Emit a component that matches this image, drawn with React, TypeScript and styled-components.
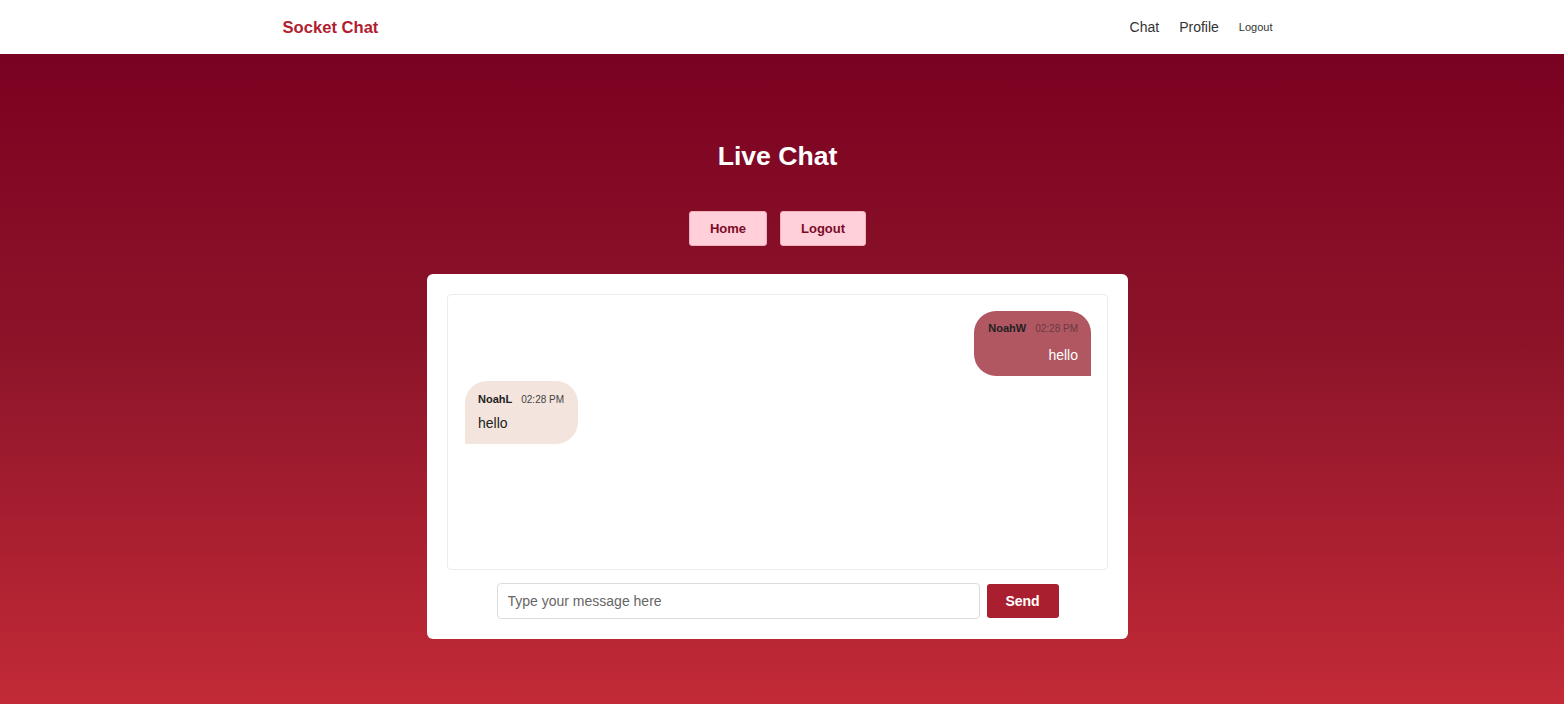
import React from "react";
import styled, { createGlobalStyle } from "styled-components";

const Global = createGlobalStyle`
  * { box-sizing: border-box; }
  html, body { margin: 0; padding: 0; }
  body { font-family: "Liberation Sans", Arial, sans-serif; background: #fff; }
`;

const Page = styled.div`
  display: flex;
  flex-direction: column;
  min-height: 704px;
`;

const NavBar = styled.header`
  height: 54px;
  background: #fff;
  display: flex;
  justify-content: center;
  padding-right: 9px;
`;

const NavInner = styled.div`
  width: 1000px;
  padding: 0 5px 0 5px;
  display: flex;
  align-items: center;
  justify-content: space-between;
`;

const Brand = styled.a`
  color: #b01e30;
  font-weight: 700;
  font-size: 16.6px;
  text-decoration: none;
  margin-top: 2px;
`;

const NavLinks = styled.nav`
  display: flex;
  align-items: center;
  gap: 20px;
`;

const NavLink = styled.a<{ $small?: boolean }>`
  color: #333;
  font-size: ${(p) => (p.$small ? "11px" : "14px")};
  text-decoration: none;
`;

const Main = styled.main`
  flex: 1;
  background: linear-gradient(180deg, #7a0221 0%, #8c1429 45%, #c32a37 100%);
  display: flex;
  flex-direction: column;
  align-items: center;
  padding-top: 87px;
  padding-bottom: 65px;
  padding-right: 9px;
`;

const Title = styled.h1`
  margin: 0;
  color: #fff;
  font-size: 26.6px;
  font-weight: 700;
  line-height: 30px;
`;

const ButtonRow = styled.div`
  display: flex;
  gap: 13px;
  margin-top: 40px;
`;

const PinkButton = styled.button`
  background: #ffd0da;
  color: #7c0a26;
  border: 1px solid #f0b0bd;
  border-radius: 3px;
  height: 35px;
  padding: 0 20px;
  font-family: inherit;
  font-weight: 700;
  font-size: 13px;
`;

const Card = styled.section`
  margin-top: 28px;
  width: 701px;
  background: #fff;
  border-radius: 6px;
  padding: 20px 20px 20px;
  display: flex;
  flex-direction: column;
  align-items: center;
`;

const Messages = styled.div`
  width: 100%;
  height: 276px;
  border: 1px solid #ececec;
  border-radius: 4px;
  padding: 16px 16px 16px 17px;
  display: flex;
  flex-direction: column;
  gap: 5px;
`;

const Bubble = styled.div<{ $mine?: boolean }>`
  align-self: ${(p) => (p.$mine ? "flex-end" : "flex-start")};
  background: ${(p) => (p.$mine ? "#b05762" : "#f3e5dd")};
  border-radius: ${(p) => (p.$mine ? "22px 22px 0 22px" : "22px 22px 22px 0")};
  padding: ${(p) => (p.$mine ? "11px 13px 12px 14px" : "12px 14px 12px 13px")};
  display: flex;
  flex-direction: column;
  gap: ${(p) => (p.$mine ? "12px" : "9px")};
`;

const Meta = styled.div`
  display: flex;
  align-items: baseline;
  gap: 9px;
`;

const Name = styled.span`
  font-size: 11px;
  font-weight: 700;
  color: #222;
`;

const Time = styled.span<{ $mine?: boolean }>`
  font-size: 10px;
  color: ${(p) => (p.$mine ? "#6b3a40" : "#444")};
`;

const Text = styled.div<{ $mine?: boolean }>`
  font-size: 14px;
  line-height: 18px;
  color: ${(p) => (p.$mine ? "#fff" : "#222")};
  text-align: ${(p) => (p.$mine ? "right" : "left")};
`;

const Composer = styled.form`
  display: flex;
  gap: 7px;
  margin-top: 13px;
`;

const Input = styled.input`
  width: 483px;
  height: 36px;
  border: 1px solid #dcdcdc;
  border-radius: 4px;
  padding: 0 10px;
  font-family: inherit;
  font-size: 14px;
  &::placeholder { color: #666; }
`;

const SendButton = styled.button`
  width: 72px;
  height: 34px;
  margin-top: 1px;
  background: #a91f30;
  color: #fff;
  border: none;
  border-radius: 3px;
  font-family: inherit;
  font-weight: 700;
  font-size: 14px;
`;

const messages = [
  { name: "NoahW", time: "02:28 PM", text: "hello", mine: true },
  { name: "NoahL", time: "02:28 PM", text: "hello", mine: false },
];

export default function App() {
  return (
    <Page>
      <Global />
      <NavBar>
        <NavInner>
          <Brand href="#">Socket Chat</Brand>
          <NavLinks>
            <NavLink href="#">Chat</NavLink>
            <NavLink href="#">Profile</NavLink>
            <NavLink href="#" $small>Logout</NavLink>
          </NavLinks>
        </NavInner>
      </NavBar>
      <Main>
        <Title>Live Chat</Title>
        <ButtonRow>
          <PinkButton>Home</PinkButton>
          <PinkButton>Logout</PinkButton>
        </ButtonRow>
        <Card>
          <Messages>
            {messages.map((m, i) => (
              <Bubble key={i} $mine={m.mine}>
                <Meta>
                  <Name>{m.name}</Name>
                  <Time $mine={m.mine}>{m.time}</Time>
                </Meta>
                <Text $mine={m.mine}>{m.text}</Text>
              </Bubble>
            ))}
          </Messages>
          <Composer onSubmit={(e) => e.preventDefault()}>
            <Input placeholder="Type your message here" />
            <SendButton type="submit">Send</SendButton>
          </Composer>
        </Card>
      </Main>
    </Page>
  );
}
